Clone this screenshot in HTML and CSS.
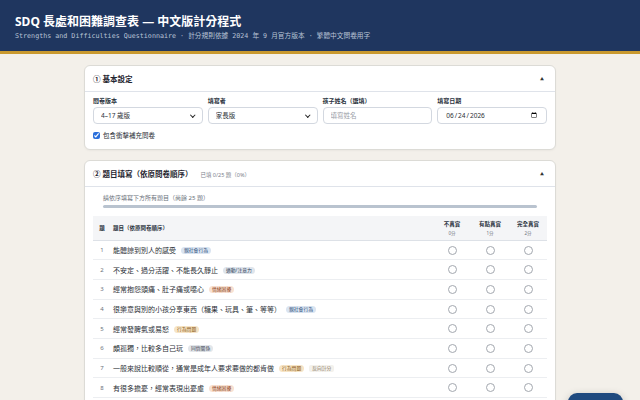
FILE: index.html
```html
<!DOCTYPE html>
<html lang="zh-Hant">
  <head>
    <meta charset="UTF-8" />
    <meta name="viewport" content="width=device-width, initial-scale=1.0" />
    <title>SDQ 長處和困難調查表 — 中文版計分程式</title>
    <link rel="stylesheet" href="styles.css">
  </head>
  <body>
    <header class="top-bar">
      <h1 class="title">SDQ 長處和困難調查表 — 中文版計分程式</h1>
      <p class="subtitle">Strengths and Difficulties Questionnaire · 計分規則依據 2024 年 9 月官方版本 · 繁體中文問卷用字</p>
    </header>

    <main class="page">
      <section class="card">
        <div class="card-head">
          <h2 class="card-title">① 基本設定</h2>
          <span class="toggle">▲</span>
        </div>
        <div class="card-body">
          <div class="settings-grid">
            <label class="field">
              <span class="field-label">問卷版本</span>
              <span class="select-wrap">
                <select class="control">
                  <option>4–17 歲版</option>
                  <option>2–4 歲版</option>
                </select>
              </span>
            </label>
            <label class="field">
              <span class="field-label">填寫者</span>
              <span class="select-wrap">
                <select class="control">
                  <option>家長版</option>
                  <option>教師版</option>
                </select>
              </span>
            </label>
            <label class="field">
              <span class="field-label">孩子姓名（選填）</span>
              <input class="control" type="text" placeholder="填寫姓名" />
            </label>
            <label class="field">
              <span class="field-label">填寫日期</span>
              <input class="control" type="date" value="2026-06-24" />
            </label>
          </div>
          <label class="check-row">
            <input type="checkbox" checked />
            <span>包含衝擊補充問卷</span>
          </label>
        </div>
      </section>

      <section class="card">
        <div class="card-head">
          <h2 class="card-title">② 題目填寫（依原問卷順序） <span class="progress-note">已填 0/25 題（0%）</span></h2>
          <span class="toggle">▲</span>
        </div>
        <div class="card-body">
          <div class="progress-box">
            <p class="hint">請依序填寫下方所有題目（尚餘 25 題）</p>
            <div class="progress-track"><div class="progress-fill" style="width: 0%"></div></div>
          </div>

          <table class="items">
            <thead>
              <tr>
                <th class="col-no">題</th>
                <th class="col-text">題目（依原問卷順序）</th>
                <th class="col-opt">不真實<small>0分</small></th>
                <th class="col-opt">有點真實<small>1分</small></th>
                <th class="col-opt">完全真實<small>2分</small></th>
              </tr>
            </thead>
            <tbody>
              <tr>
                <td class="col-no">1</td>
                <td class="col-text">能體諒到別人的感受<span class="tag tag-pro">親社會行為</span></td>
                <td class="col-opt"><input type="radio" name="q1" /></td>
                <td class="col-opt"><input type="radio" name="q1" /></td>
                <td class="col-opt"><input type="radio" name="q1" /></td>
              </tr>
              <tr>
                <td class="col-no">2</td>
                <td class="col-text">不安定、過分活躍、不能長久靜止<span class="tag tag-hyp">過動/注意力</span></td>
                <td class="col-opt"><input type="radio" name="q2" /></td>
                <td class="col-opt"><input type="radio" name="q2" /></td>
                <td class="col-opt"><input type="radio" name="q2" /></td>
              </tr>
              <tr>
                <td class="col-no">3</td>
                <td class="col-text">經常抱怨頭痛、肚子痛或噁心<span class="tag tag-emo">情緒困擾</span></td>
                <td class="col-opt"><input type="radio" name="q3" /></td>
                <td class="col-opt"><input type="radio" name="q3" /></td>
                <td class="col-opt"><input type="radio" name="q3" /></td>
              </tr>
              <tr>
                <td class="col-no">4</td>
                <td class="col-text">很樂意與別的小孩分享東西（糖果、玩具、筆、等等）<span class="tag tag-pro">親社會行為</span></td>
                <td class="col-opt"><input type="radio" name="q4" /></td>
                <td class="col-opt"><input type="radio" name="q4" /></td>
                <td class="col-opt"><input type="radio" name="q4" /></td>
              </tr>
              <tr>
                <td class="col-no">5</td>
                <td class="col-text">經常發脾氣或易怒<span class="tag tag-con">行為問題</span></td>
                <td class="col-opt"><input type="radio" name="q5" /></td>
                <td class="col-opt"><input type="radio" name="q5" /></td>
                <td class="col-opt"><input type="radio" name="q5" /></td>
              </tr>
              <tr>
                <td class="col-no">6</td>
                <td class="col-text">頗孤獨，比較多自己玩<span class="tag tag-peer">同儕關係</span></td>
                <td class="col-opt"><input type="radio" name="q6" /></td>
                <td class="col-opt"><input type="radio" name="q6" /></td>
                <td class="col-opt"><input type="radio" name="q6" /></td>
              </tr>
              <tr>
                <td class="col-no">7</td>
                <td class="col-text">一般來說比較順從，通常是成年人要求要做的都肯做<span class="tag tag-con">行為問題</span><span class="tag tag-rev">反向計分</span></td>
                <td class="col-opt"><input type="radio" name="q7" /></td>
                <td class="col-opt"><input type="radio" name="q7" /></td>
                <td class="col-opt"><input type="radio" name="q7" /></td>
              </tr>
              <tr>
                <td class="col-no">8</td>
                <td class="col-text">有很多擔憂，經常表現出憂慮<span class="tag tag-emo">情緒困擾</span></td>
                <td class="col-opt"><input type="radio" name="q8" /></td>
                <td class="col-opt"><input type="radio" name="q8" /></td>
                <td class="col-opt"><input type="radio" name="q8" /></td>
              </tr>
              <tr>
                <td class="col-no">9</td>
                <td class="col-text">如果有人受傷、不舒服或生病，都很樂意幫忙<span class="tag tag-pro">親社會行為</span></td>
                <td class="col-opt"><input type="radio" name="q9" /></td>
                <td class="col-opt"><input type="radio" name="q9" /></td>
                <td class="col-opt"><input type="radio" name="q9" /></td>
              </tr>
              <tr>
                <td class="col-no">10</td>
                <td class="col-text">經常坐立不安或感到不耐煩<span class="tag tag-hyp">過動/注意力</span></td>
                <td class="col-opt"><input type="radio" name="q10" /></td>
                <td class="col-opt"><input type="radio" name="q10" /></td>
                <td class="col-opt"><input type="radio" name="q10" /></td>
              </tr>
            </tbody>
          </table>
        </div>
      </section>
    </main>

    <button class="float-btn" type="button">查看結果</button>
  </body>
</html>
```

FILE: styles.css
```css
body {
  margin: 0;
  font-family: "Noto Sans", "Noto Sans CJK TC", sans-serif;
  background-color: #f3f0ea;
  color: #2b2f36;
}

.top-bar {
  background-color: #1f365f;
  border-bottom: 3px solid #c9992e;
  padding: 14px 15px 10px;
  color: white;
}

.title {
  margin: 0;
  font-size: 12px;
  line-height: 16px;
  font-weight: bold;
}

.subtitle {
  margin: 2px 0 0;
  font-family: "DejaVu Sans Mono", "Noto Sans CJK TC", monospace;
  font-size: 6.7px;
  line-height: 9px;
  color: #b9c4d6;
}

.page {
  width: 472px;
  margin: 11px auto;
}

.card {
  background: white;
  border: 1px solid #dcdbd6;
  border-radius: 6px;
  margin-bottom: 10px;
  box-shadow: 0 1px 2px rgba(0, 0, 0, 0.04);
}

.card-head {
  height: 25px;
  display: flex;
  align-items: center;
  justify-content: space-between;
  padding: 0 11px 0 8px;
  border-bottom: 1px solid #dfe3ea;
}

.card-title {
  margin: 0;
  font-size: 7.5px;
  font-weight: bold;
  color: #1f2530;
}

.progress-note {
  margin-left: 6px;
  font-size: 5.5px;
  font-weight: normal;
  color: #7a808a;
}

.toggle {
  font-size: 4px;
  color: #333;
}

.card-body {
  padding: 5px 8px 9px;
}

.settings-grid {
  display: grid;
  grid-template-columns: repeat(4, 1fr);
  gap: 5px;
}

.field {
  display: flex;
  flex-direction: column;
  gap: 2px;
}

.field-label {
  font-size: 6px;
  line-height: 8px;
  font-weight: 600;
  color: #2b3340;
}

.control {
  display: block;
  box-sizing: border-box;
  height: 17px;
  width: 100%;
  margin: 0;
  padding: 0 7px;
  font-family: "Noto Sans", "Noto Sans CJK TC", sans-serif;
  font-size: 6.5px;
  color: #2b2f36;
  background: white;
  border: 1px solid #d3d8e0;
  border-radius: 4px;
}

.control::placeholder {
  color: #9aa0a8;
}

.select-wrap {
  position: relative;
  display: block;
}

.select-wrap select {
  appearance: none;
}

.select-wrap::after {
  content: "";
  position: absolute;
  right: 8px;
  top: 6px;
  width: 2.5px;
  height: 2.5px;
  border-right: 1.2px solid #222;
  border-bottom: 1.2px solid #222;
  transform: rotate(45deg);
  pointer-events: none;
}

.check-row {
  display: flex;
  align-items: center;
  gap: 3px;
  margin-top: 6px;
  height: 10px;
  font-size: 6.5px;
  color: #2b2f36;
}

.check-row input {
  width: 7px;
  height: 7px;
  margin: 0;
  accent-color: #2a6fdb;
}

.progress-box {
  padding: 2px 10px 0;
}

.hint {
  margin: 0;
  font-size: 6px;
  line-height: 9px;
  color: #6b717b;
}

.progress-track {
  margin-top: 2px;
  height: 2.5px;
  background: #b9c3cf;
  border-radius: 2px;
}

.progress-fill {
  height: 100%;
  background: #2c5aa0;
  border-radius: 2px;
}

.items {
  width: 100%;
  margin-top: 8px;
  border-collapse: collapse;
  table-layout: fixed;
}

.items th {
  height: 24px;
  padding: 0;
  background: #f4f5f7;
  border-bottom: 1px solid #dde1e7;
  font-size: 5.5px;
  font-weight: bold;
  color: #2b3340;
  text-align: left;
}

.items th small {
  display: block;
  margin-top: 2px;
  font-size: 4.5px;
  font-weight: normal;
  color: #6b717b;
}

.items td {
  height: 18.7px;
  padding: 0;
  border-bottom: 1px solid #eceef1;
  font-size: 7px;
  color: #2b2f36;
}

.items .col-no {
  width: 18px;
  text-align: center;
  font-size: 6px;
  color: #6b717b;
}

.items th.col-no {
  font-size: 5.5px;
  color: #2b3340;
}

.items .col-text {
  padding-left: 2px;
  white-space: nowrap;
}

.items .col-opt {
  width: 38px;
  text-align: center;
}

.items input[type="radio"] {
  appearance: none;
  width: 9px;
  height: 9px;
  margin: 0;
  vertical-align: middle;
  border: 1px solid #a3a8af;
  border-radius: 50%;
  background: white;
}

.tag {
  display: inline-block;
  margin-left: 5px;
  padding: 0 3px;
  font-size: 4.8px;
  line-height: 7px;
  border-radius: 6px;
  vertical-align: 1px;
}

.tag-pro {
  background: #dae4f1;
  color: #274a78;
}

.tag-hyp {
  background: #dfe5ec;
  color: #2d4058;
}

.tag-emo {
  background: #f8e1d2;
  color: #8a3a14;
}

.tag-con {
  background: #f6e4c6;
  color: #8a5510;
}

.tag-peer {
  background: #e3e6ea;
  color: #39424e;
}

.tag-rev {
  background: #f3f1ec;
  color: #8a7660;
  border-radius: 2px;
}

.float-btn {
  position: fixed;
  right: 17px;
  bottom: -21px;
  width: 55px;
  height: 28px;
  border: none;
  border-radius: 9px;
  background-color: #1f4a7f;
  color: white;
  font-size: 7px;
  box-shadow: 0 2px 8px rgba(0, 0, 0, 0.2);
}
```
